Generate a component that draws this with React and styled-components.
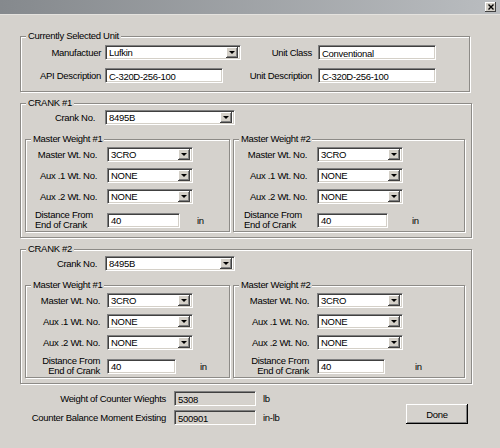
import React from "react";
import styled, { createGlobalStyle } from "styled-components";

const FACE = "#d5d2cd";

const GlobalStyle = createGlobalStyle`
  html, body {
    margin: 0;
    padding: 0;
  }
  body {
    background: ${FACE};
    font-family: "Liberation Sans", Arial, sans-serif;
    font-size: 9.5px;
    letter-spacing: -0.3px;
    color: #000;
  }
`;

const Window = styled.div`
  width: 500px;
  height: 448px;
  background: ${FACE};
  display: flex;
  flex-direction: column;
  overflow: hidden;
`;

const TitleBar = styled.div`
  height: 14px;
  flex: none;
  background: linear-gradient(to right, #85898d, #babdc0);
  border-bottom: 1px solid #e4e2de;
  display: flex;
  align-items: center;
  justify-content: flex-end;
  padding-right: 4px;
`;

const CloseBox = styled.div`
  width: 11px;
  height: 10px;
  background: #d4d0c8;
  box-shadow: inset -1px -1px 0 #404040, inset 1px 1px 0 #fff;
  display: flex;
  align-items: center;
  justify-content: center;
`;

const Body = styled.div`
  display: flex;
  flex-direction: column;
  padding-left: 20px;
`;

const Group = styled.fieldset`
  box-sizing: border-box;
  width: ${(p) => p.$w}px;
  min-inline-size: 0;
  margin: ${(p) => p.$mt || 0}px 0 0 0;
  padding: ${(p) => p.$pt || 0}px 0 ${(p) => p.$pb || 0}px 0;
  border: 1px solid #8d8b87;
  box-shadow: 1px 1px 0 #fff, inset 1px 1px 0 #fff;
`;

const Legend = styled.legend`
  padding: 0 2px;
  margin-left: 5px;
  line-height: 12px;
  background: ${FACE};
`;

const UnitGrid = styled.div`
  display: grid;
  grid-template-columns: 84px 136px 77px 118px;
  row-gap: 8px;
  align-items: center;
`;

const Label = styled.div`
  text-align: ${(p) => p.$align || "right"};
  padding-right: ${(p) => p.$pr || 0}px;
  padding-left: ${(p) => p.$pl || 0}px;
  line-height: ${(p) => p.$lh || 12}px;
  white-space: nowrap;
`;

const TextBox = styled.div`
  box-sizing: border-box;
  width: ${(p) => p.$w}px;
  height: 15px;
  background: ${(p) => (p.$readOnly ? FACE : "#fff")};
  border-top: 1px solid #808080;
  border-left: 1px solid #808080;
  border-bottom: 1px solid #fff;
  border-right: 1px solid #fff;
  box-shadow: inset 1px 1px 0 #404040, inset -1px -1px 0 #d4d0c8;
  padding: 1px 3px 0 3px;
  display: flex;
  align-items: center;
  white-space: nowrap;
  overflow: hidden;
`;

const Combo = styled(TextBox)`
  justify-content: space-between;
  padding: 0 2px 0 3px;
`;

const DropButton = styled.span`
  flex: none;
  width: 12px;
  height: 11px;
  background: #d4d0c8;
  box-shadow: inset -1px -1px 0 #404040, inset 1px 1px 0 #fff,
    inset -2px -2px 0 #808080;
  display: flex;
  align-items: center;
  justify-content: center;
  &::after {
    content: "";
    border-left: 3px solid transparent;
    border-right: 3px solid transparent;
    border-top: 3px solid #000;
  }
`;

const CrankRow = styled.div`
  display: grid;
  grid-template-columns: 84px 130px;
  align-items: center;
`;

const WeightPair = styled.div`
  display: flex;
  gap: 3px;
  margin: 8px 0 0 4px;
`;

const WeightGrid = styled.div`
  display: grid;
  grid-template-columns: ${(p) => p.$lw}px auto 1fr;
  row-gap: 6px;
  align-items: center;
`;

const Unit = styled.span`
  margin-left: ${(p) => p.$ml || 4}px;
  white-space: nowrap;
`;

const Footer = styled.div`
  display: flex;
  align-items: flex-end;
  width: 448px;
  margin-top: 7px;
`;

const Totals = styled.div`
  display: grid;
  grid-template-columns: 154px 82px auto;
  row-gap: 4px;
  align-items: center;
`;

const DoneButton = styled.button`
  margin-left: auto;
  margin-bottom: 1px;
  width: 62px;
  height: 20px;
  padding: 0;
  font: inherit;
  letter-spacing: inherit;
  background: ${FACE};
  border: none;
  box-shadow: inset -1px -1px 0 #000, inset 1px 1px 0 #fff,
    inset -2px -2px 0 #808080;
`;

function Select({ w, value }) {
  return (
    <Combo $w={w}>
      <span>{value}</span>
      <DropButton />
    </Combo>
  );
}

function MasterWeight({ n, w, lw, pr, distAlign, distPad, distW, unitGap }) {
  return (
    <Group $w={w} $pt={2} $pb={1}>
      <Legend>Master Weight #{n}</Legend>
      <WeightGrid $lw={lw}>
        <Label $pr={pr}>Master Wt. No.</Label>
        <Select w={86} value="3CRO" />
        <span />
        <Label $pr={pr}>Aux .1 Wt. No.</Label>
        <Select w={86} value="NONE" />
        <span />
        <Label $pr={pr}>Aux .2 Wt. No.</Label>
        <Select w={86} value="NONE" />
        <span />
        <Label
          $align={distAlign}
          $pl={distAlign === "left" ? distPad : 0}
          $pr={distAlign === "left" ? 0 : distPad}
          $lh={10}
        >
          Distance From
          <br />
          End of Crank
        </Label>
        <TextBox $w={distW}>40</TextBox>
        <Unit $ml={unitGap}>in</Unit>
      </WeightGrid>
    </Group>
  );
}

function Crank({ n, mt, distAlign }) {
  const left = distAlign === "left";
  return (
    <Group $w={452} $mt={mt} $pt={1} $pb={5}>
      <Legend>CRANK #{n}</Legend>
      <CrankRow>
        <Label $pr={left ? 10 : 8}>Crank No.</Label>
        <Select w={130} value="8495B" />
      </CrankRow>
      <WeightPair>
        <MasterWeight
          n={1}
          w={205}
          lw={81}
          pr={left ? 10 : 7}
          distAlign={distAlign}
          distPad={left ? 9 : 7}
          distW={left ? 73 : 69}
          unitGap={left ? 4 : 7}
        />
        <MasterWeight
          n={2}
          w={232}
          lw={83}
          pr={left ? 10 : 8}
          distAlign={distAlign}
          distPad={left ? 10 : 8}
          distW={left ? 71 : 68}
          unitGap={left ? 9 : 12}
        />
      </WeightPair>
    </Group>
  );
}

export default function App() {
  return (
    <>
      <GlobalStyle />
      <Window>
        <TitleBar>
          <CloseBox>
            <svg width="6" height="6" viewBox="0 0 6 6">
              <path d="M0.5 0.5 L5.5 5.5 M5.5 0.5 L0.5 5.5" stroke="#000" strokeWidth="1.4" />
            </svg>
          </CloseBox>
        </TitleBar>
        <Body>
          <Group $w={450} $mt={15} $pt={3} $pb={8}>
            <Legend>Currently Selected Unit</Legend>
            <UnitGrid>
              <Label $pr={4}>Manufactuer</Label>
              <Select w={136} value="Lufkin" />
              <Label $pr={6}>Unit Class</Label>
              <TextBox $w={118}>Conventional</TextBox>
              <Label $pr={4}>API Description</Label>
              <TextBox $w={118}>C-320D-256-100</TextBox>
              <Label $pr={6}>Unit Description</Label>
              <TextBox $w={118}>C-320D-256-100</TextBox>
            </UnitGrid>
          </Group>
          <Crank n={1} mt={5} distAlign="left" />
          <Crank n={2} mt={5} distAlign="right" />
          <Footer>
            <Totals>
              <Label $pr={8}>Weight of Counter Wieghts</Label>
              <TextBox $w={82} $readOnly>5308</TextBox>
              <Unit $ml={7}>lb</Unit>
              <Label $pr={8}>Counter Balance Moment Existing</Label>
              <TextBox $w={82} $readOnly>500901</TextBox>
              <Unit $ml={7}>in-lb</Unit>
            </Totals>
            <DoneButton>Done</DoneButton>
          </Footer>
        </Body>
      </Window>
    </>
  );
}
